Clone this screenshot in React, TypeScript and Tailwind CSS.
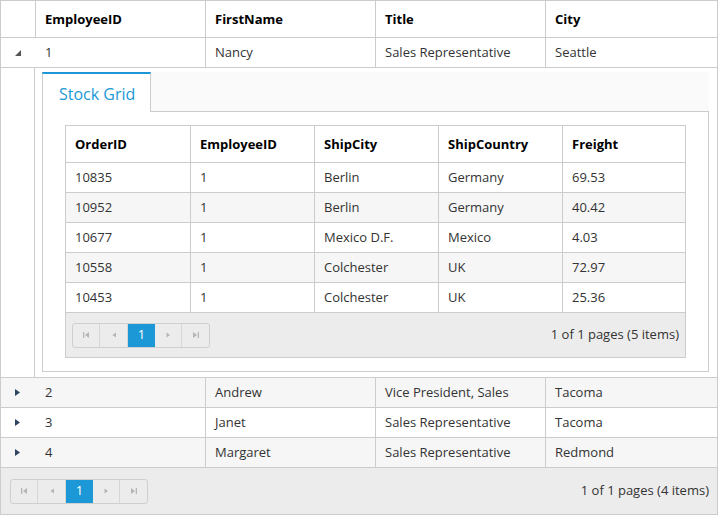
import React from "react";

const outerCols = "grid grid-cols-[35px_170px_170px_170px_1fr]";
const innerCols = "grid grid-cols-[125px_124px_124px_124px_1fr]";

const employees = [
  { id: "1", first: "Nancy", title: "Sales Representative", city: "Seattle" },
  { id: "2", first: "Andrew", title: "Vice President, Sales", city: "Tacoma" },
  { id: "3", first: "Janet", title: "Sales Representative", city: "Tacoma" },
  { id: "4", first: "Margaret", title: "Sales Representative", city: "Redmond" },
];

const orders = [
  ["10835", "1", "Berlin", "Germany", "69.53"],
  ["10952", "1", "Berlin", "Germany", "40.42"],
  ["10677", "1", "Mexico D.F.", "Mexico", "4.03"],
  ["10558", "1", "Colchester", "UK", "72.97"],
  ["10453", "1", "Colchester", "UK", "25.36"],
];

// little pager glyphs
const PageIcon = ({ kind }: { kind: "first" | "prev" | "next" | "last" }) => (
  <svg width="8" height="8" viewBox="0 0 8 8" fill="#b5b5b5">
    {kind === "first" && (
      <>
        <rect x="1" y="1" width="1.3" height="6" />
        <polygon points="7,1 7,7 3,4" />
      </>
    )}
    {kind === "prev" && <polygon points="6,1.5 6,6.5 2.5,4" />}
    {kind === "next" && <polygon points="2.5,1.5 2.5,6.5 6,4" />}
    {kind === "last" && (
      <>
        <polygon points="1,1 1,7 5,4" />
        <rect x="5.7" y="1" width="1.3" height="6" />
      </>
    )}
  </svg>
);

const Pager = ({ items }: { items: number }) => (
  <div className="flex items-center justify-between h-full">
    <div className="flex h-[25px] rounded-[3px] border border-[#cfcfcf] overflow-hidden">
      <div className="w-[27px] flex items-center justify-center border-r border-[#d6d6d6]">
        <PageIcon kind="first" />
      </div>
      <div className="w-[28px] flex items-center justify-center border-r border-[#d6d6d6]">
        <PageIcon kind="prev" />
      </div>
      <div className="w-[27px] flex items-center justify-center bg-[#1b98d5] text-white text-[13px]">1</div>
      <div className="w-[27px] flex items-center justify-center border-r border-[#d6d6d6]">
        <PageIcon kind="next" />
      </div>
      <div className="w-[27px] flex items-center justify-center">
        <PageIcon kind="last" />
      </div>
    </div>
    <span className="text-[13px] text-[#333]">1 of 1 pages ({items} items)</span>
  </div>
);

const StockGrid = () => (
  <div className="w-[621px] border border-[#cccccc]">
    <div className={`${innerCols} h-[37px] border-b border-[#cccccc] font-bold text-black`}>
      {["OrderID", "EmployeeID", "ShipCity", "ShipCountry", "Freight"].map((h, i) => (
        <div key={h} className={`flex items-center pl-[9px] pt-[1px] ${i < 4 ? "border-r border-[#cccccc]" : ""}`}>
          {h}
        </div>
      ))}
    </div>
    {orders.map((row, r) => (
      <div
        key={row[0]}
        className={`${innerCols} h-[30px] border-b border-[#cccccc] ${r % 2 === 1 ? "bg-[#f6f6f6]" : "bg-white"}`}
      >
        {row.map((c, i) => (
          <div key={i} className={`flex items-center pl-[9px] pt-[1px] ${i < 4 ? "border-r border-[#cccccc]" : ""}`}>
            {c}
          </div>
        ))}
      </div>
    ))}
    <div className="h-[44px] bg-[#ececec] pl-[6px] pr-[6px]">
      <Pager items={5} />
    </div>
  </div>
);

const Arrow = ({ open }: { open: boolean }) =>
  open ? (
    <svg width="6" height="6" viewBox="0 0 6 6">
      <polygon points="6,0 6,6 0,6" fill="#555" />
    </svg>
  ) : (
    <svg width="5" height="7" viewBox="0 0 5 7">
      <polygon points="0,0 5,3.5 0,7" fill="#2f4460" />
    </svg>
  );

const EmployeeRow = ({ e, alt, open }: { e: (typeof employees)[0]; alt: boolean; open: boolean }) => (
  <div className={`${outerCols} h-[30px] border-b border-[#cccccc] ${alt ? "bg-[#f6f6f6]" : "bg-white"}`}>
    <div className="flex items-center justify-center pr-[2px]">
      <Arrow open={open} />
    </div>
    <div className="flex items-center pl-[9px] pt-[1px] border-r border-[#cccccc]">{e.id}</div>
    <div className="flex items-center pl-[9px] pt-[1px] border-r border-[#cccccc]">{e.first}</div>
    <div className="flex items-center pl-[9px] pt-[1px] border-r border-[#cccccc]">{e.title}</div>
    <div className="flex items-center pl-[9px] pt-[1px]">{e.city}</div>
  </div>
);

export default function App() {
  return (
    <div className="w-[718px] border border-[#cccccc] bg-white font-['Open_Sans',sans-serif] text-[13px] text-[#333]">
      <div className={`${outerCols} h-[37px] border-b border-[#cccccc] font-bold text-black`}>
        <div className="border-r border-[#cccccc]" />
        {["EmployeeID", "FirstName", "Title", "City"].map((h, i) => (
          <div key={h} className={`flex items-center pl-[9px] pt-[1px] ${i < 3 ? "border-r border-[#cccccc]" : ""}`}>
            {h}
          </div>
        ))}
      </div>

      <EmployeeRow e={employees[0]} alt={false} open />

      {/* detail row */}
      <div className="grid grid-cols-[33px_1fr] border-b border-[#cccccc]">
        <div />
        <div className="border-l border-[#cccccc] pt-[4px] pl-[7px] pr-[9px] pb-[5px]">
          <div className="flex h-[40px]">
            <div className="w-[109px] bg-white border-t-2 border-t-[#1b98d5] border-l border-r border-[#cccccc] flex items-center pl-[16px] pt-[1px] text-[16px] text-[#1b98d5]">
              Stock Grid
            </div>
            <div className="flex-1 bg-[#fafafa] border-b border-[#cccccc]" />
          </div>
          <div className="border-l border-r border-b border-[#cccccc] px-[22px] py-[13px]">
            <StockGrid />
          </div>
        </div>
      </div>

      {employees.slice(1).map((e, i) => (
        <EmployeeRow key={e.id} e={e} alt={i % 2 === 0} open={false} />
      ))}

      <div className="h-[46px] bg-[#ececec] pl-[9px] pr-[8px]">
        <Pager items={4} />
      </div>
    </div>
  );
}
